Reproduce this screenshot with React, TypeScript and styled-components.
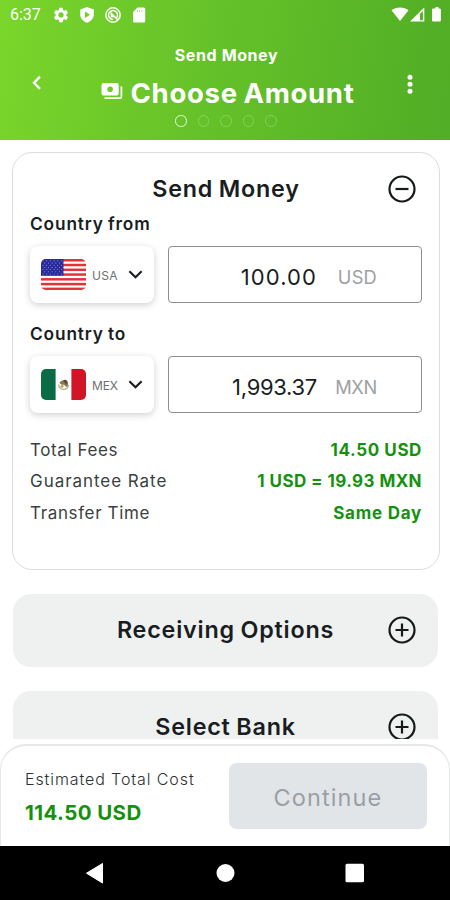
import React from 'react';
import styled, { createGlobalStyle } from 'styled-components';
import { MdSettings } from 'react-icons/md';

const GlobalStyle = createGlobalStyle`
  * { box-sizing: border-box; }
  body { margin: 0; background: #fff; font-family: Inter, "Open Sans", sans-serif; color: #191d1f; }
`;

const Screen = styled.div`
  width: 450px;
  height: 900px;
  display: flex;
  flex-direction: column;
  overflow: hidden;
  background: #fff;
`;

const Header = styled.header`
  height: 140px;
  flex: none;
  display: flex;
  flex-direction: column;
  color: #fff;
  background: linear-gradient(99deg, #7ad62a 0%, #66c229 45%, #50ad25 100%);
`;

const StatusBar = styled.div`
  height: 30px;
  padding: 0 7px 0 10px;
  display: flex;
  align-items: center;
  justify-content: space-between;
`;

const StatusGroup = styled.div<{ $gap: number }>`
  display: flex;
  align-items: center;
  gap: ${(p) => p.$gap}px;
  svg { display: block; }
`;

const Clock = styled.span`
  width: 34px;
  font: 400 16px/30px Roboto, sans-serif;
`;

const NavBar = styled.div`
  flex: 1;
  display: grid;
  grid-template-columns: 73px 1fr 81px;
`;

const IconButton = styled.button`
  border: 0;
  padding: 0;
  background: none;
  color: inherit;
  height: 106px;
  display: flex;
  align-items: center;
  justify-content: center;
`;

const Titles = styled.div`
  padding-left: 10px;
  display: flex;
  flex-direction: column;
  align-items: center;
`;

const Eyebrow = styled.div`
  margin-top: 13px;
  padding-left: 1px;
  font-size: 16px;
  font-weight: 700;
  line-height: 24px;
  letter-spacing: 0.6px;
`;

const Title = styled.h1`
  margin: 8px 0 0;
  padding-left: 3px;
  display: flex;
  align-items: center;
  gap: 8px;
  font-size: 27.5px;
  font-weight: 700;
  line-height: 36px;
  letter-spacing: 0.7px;
  word-spacing: -1.5px;
  white-space: nowrap;
  svg { margin-top: -3px; }
`;

const Steps = styled.div`
  margin-top: 4px;
  display: flex;
  gap: 11px;
`;

const Step = styled.span<{ $active?: boolean }>`
  width: 11.5px;
  height: 11.5px;
  border-radius: 50%;
  border: 1.6px solid ${(p) => (p.$active ? '#e9fbd9' : 'rgba(170, 228, 130, 0.5)')};
`;

const Content = styled.main`
  height: 599px;
  flex: none;
  padding: 12px 12px 0;
  overflow: hidden;
`;

const Card = styled.section`
  width: 428px;
  height: 418px;
  padding: 0 17px;
  border: 1.5px solid #dcdddd;
  border-radius: 20px;
  background: #fff;
`;

const PanelHeader = styled.div<{ $height: number; $top?: number }>`
  height: ${(p) => p.$height}px;
  padding-top: ${(p) => p.$top ?? 0}px;
  display: grid;
  grid-template-columns: 40px 1fr 40px;
  align-items: center;
  svg { display: block; justify-self: center; }
`;

const PanelTitle = styled.h2`
  grid-column: 2;
  margin: 0;
  text-align: center;
  font-size: 23.3px;
  font-weight: 600;
  line-height: 30px;
  letter-spacing: 0.8px;
  word-spacing: -1px;
  white-space: nowrap;
`;

const Label = styled.div`
  font-size: 17.3px;
  font-weight: 600;
  line-height: 20px;
  letter-spacing: 0.85px;
  word-spacing: -1px;
`;

const Field = styled.div<{ $gap: number }>`
  margin: 12px 0 ${(p) => p.$gap}px;
  display: flex;
  gap: 14px;
`;

const CountrySelect = styled.div`
  width: 124px;
  height: 57px;
  padding: 0 10px 0 11px;
  display: flex;
  align-items: center;
  border-radius: 8px;
  background: #fff;
  box-shadow: 0 2px 7px rgba(0, 0, 0, 0.19);
  svg { display: block; flex: none; }
`;

const CountryCode = styled.span<{ $spacing: number }>`
  width: 42px;
  padding: 1px 0 0 6px;
  font-size: 12px;
  letter-spacing: ${(p) => p.$spacing}px;
  color: #6e7070;
`;

const AmountBox = styled.div`
  width: 254px;
  height: 57px;
  padding: 4px 44px 0 0;
  display: flex;
  align-items: center;
  justify-content: flex-end;
  border: 1.5px solid #8b8d8e;
  border-radius: 4px;
`;

const Amount = styled.span<{ $spacing: number }>`
  font-size: 22px;
  font-weight: 380;
  letter-spacing: ${(p) => p.$spacing}px;
`;

const Currency = styled.span<{ $spacing: number }>`
  width: 60px;
  text-align: right;
  font-size: 18.3px;
  font-weight: 370;
  letter-spacing: ${(p) => p.$spacing}px;
  color: #9da1a2;
`;

const Detail = styled.div`
  height: 31.5px;
  display: flex;
  align-items: center;
  justify-content: space-between;
  font-size: 17px;
  white-space: nowrap;
`;

const DetailName = styled.span<{ $spacing: number }>`
  font-weight: 380;
  letter-spacing: ${(p) => p.$spacing}px;
  color: #3b3f40;
`;

const DetailValue = styled.span<{ $spacing: number }>`
  font-weight: 650;
  letter-spacing: ${(p) => p.$spacing}px;
  color: #15910f;
`;

const CollapsedPanel = styled.section`
  width: 425px;
  height: 73px;
  margin: 24px 0 0 1px;
  padding: 0 16px;
  border-radius: 18px;
  background: #eff1f1;
`;

const Footer = styled.footer`
  height: 102px;
  margin-top: 5px;
  flex: none;
  padding: 17px 22px 0 24px;
  display: flex;
  justify-content: space-between;
  border: 2px solid #e6e7e7;
  border-width: 2px 1px 0;
  border-radius: 26px 26px 0 0;
  background: #fff;
`;

const Total = styled.div`
  display: flex;
  flex-direction: column;
`;

const TotalLabel = styled.span`
  margin-top: 4px;
  font-size: 16px;
  font-weight: 330;
  line-height: 24px;
  letter-spacing: 0.9px;
  color: #2d3132;
`;

const TotalValue = styled.span`
  margin-top: 8px;
  font-size: 20.5px;
  font-weight: 680;
  line-height: 28px;
  letter-spacing: 0.4px;
  color: #15910f;
`;

const ContinueButton = styled.button`
  width: 198px;
  height: 66px;
  border: 0;
  border-radius: 8px;
  background: #e2e5e7;
  color: #999fa5;
  font-family: inherit;
  font-size: 23.5px;
  letter-spacing: 1.1px;
  padding: 2px 0 0;
`;

const SystemNav = styled.nav`
  height: 54px;
  flex: none;
  background: #000;
  svg { display: block; margin: 0 auto; }
`;

function ToggleIcon({ open }: { open?: boolean }) {
  return (
    <svg width="28" height="28" viewBox="0 0 28 28" fill="none" stroke="#15191a" strokeWidth="2.2">
      <circle cx="14" cy="14" r="12.5" />
      <path d={open ? 'M7.5 14h13' : 'M7.5 14h13M14 7.5v13'} />
    </svg>
  );
}

function Chevron() {
  return (
    <svg width="15" height="11" viewBox="0 0 15 11" fill="none" stroke="#191d1f" strokeWidth="2.1">
      <path d="M1.4 2.2 7.5 8.3l6.1-6.1" />
    </svg>
  );
}

function UsaFlag() {
  const stars = [];
  for (let r = 0; r < 7; r++) {
    for (let c = 0; c < 6; c++) {
      stars.push(<circle key={`${r}-${c}`} cx={2 + c * 3.7 + (r % 2) * 1.7} cy={1.8 + r * 2.2} r="0.5" />);
    }
  }
  return (
    <svg width="45" height="31" viewBox="0 0 45 31">
      <clipPath id="usa"><rect width="45" height="31" rx="5" /></clipPath>
      <g clipPath="url(#usa)">
        <rect width="45" height="31" fill="#fff" />
        {[0, 1, 2, 3, 4, 5, 6].map((i) => (
          <rect key={i} y={i * 4.77} width="45" height="2.5" fill="#e0343b" />
        ))}
        <rect width="22.5" height="16.6" fill="#2a2b9b" />
        <g fill="#a9a9e0">{stars}</g>
      </g>
    </svg>
  );
}

function MexicoFlag() {
  return (
    <svg width="45" height="31" viewBox="0 0 45 31">
      <clipPath id="mex"><rect width="45" height="31" rx="5" /></clipPath>
      <g clipPath="url(#mex)">
        <rect width="45" height="31" fill="#fff" />
        <rect width="14.6" height="31" fill="#0a6b45" />
        <rect x="30.4" width="14.6" height="31" fill="#d21526" />
      </g>
      <path d="M17.6 15.5c.6 3.6 3 5 5.2 4.9 2.6 0 4.2-1.7 4.6-4.6" fill="none" stroke="#a3b58b" strokeWidth="1.3" />
      <path d="M18.5 13.5c2-2.6 6.5-3.2 8-.8 1.2 2 .6 4.3-.7 5.3-1.5-.6-2-2-3.3-2.2-1.4-.2-3.2 0-4-2.3z" fill="#91754f" />
      <path d="M22 11.5c1.5-1.3 3.6-1 4.2.8.3 1.5-.4 2.6-1.2 3.2z" fill="#5c4a35" />
      <circle cx="21" cy="17.3" r="1.5" fill="#c7a257" />
    </svg>
  );
}

function PaymentsIcon() {
  return (
    <svg width="22" height="17" viewBox="0 0 22 17">
      <path fill="#fff" fillRule="evenodd" d="M2.5 0h13.2a2 2 0 0 1 2 2v8.400a2 2 0 0 1-2 2H2.500a2 2 0 0 1-2-2V2a2 2 0 0 1 2-2zM9.100 3.400a2.800 2.800 0 1 0 0 5.600 2.800 2.800 0 0 0 0-5.600z" />
      <path d="M20.4 3.5v10.200a1.400 1.400 0 0 1-1.400 1.400H3.500" fill="none" stroke="#fff" strokeWidth="1.7" />
    </svg>
  );
}

interface FieldProps {
  flag: React.ReactNode;
  code: string;
  codeSpacing: number;
  amount: string;
  amountSpacing: number;
  currency: string;
  currencySpacing: number;
  gap: number;
}

function CountryField(p: FieldProps) {
  return (
    <Field $gap={p.gap}>
      <CountrySelect>
        {p.flag}
        <CountryCode $spacing={p.codeSpacing}>{p.code}</CountryCode>
        <Chevron />
      </CountrySelect>
      <AmountBox>
        <Amount $spacing={p.amountSpacing}>{p.amount}</Amount>
        <Currency $spacing={p.currencySpacing}>{p.currency}</Currency>
      </AmountBox>
    </Field>
  );
}

const details = [
  { name: 'Total Fees', nameSpacing: 0.6, value: '14.50 USD', valueSpacing: 0.6 },
  { name: 'Guarantee Rate', nameSpacing: 0.95, value: '1 USD = 19.93 MXN', valueSpacing: 0.42 },
  { name: 'Transfer Time', nameSpacing: 0.64, value: 'Same Day', valueSpacing: 0.75 },
];

export default function App() {
  return (
    <Screen>
      <GlobalStyle />
      <Header>
        <StatusBar>
          <StatusGroup $gap={8}>
            <Clock>6:37</Clock>
            <MdSettings size={18} />
            <svg width="18" height="18" viewBox="0 0 18 18">
              <path fill="#fff" fillRule="evenodd" d="M9 1l6.8 2.600v5.200c0 3.600-2.900 6.700-6.800 8-3.900-1.300-6.800-4.400-6.800-8V3.600zM7 5.500v6.600l5-3.300z" />
            </svg>
            <svg width="18" height="18" viewBox="0 0 18 18" fill="none" stroke="#fff" strokeWidth="1.5">
              <circle cx="9" cy="9" r="7.2" />
              <path d="M12.300 12.100A4.500 4.500 0 1 0 9 13.500M6.500 6.500l7.500 7.700M7.500 8v2.500h2.500" />
            </svg>
            <svg width="18" height="18" viewBox="0 0 18 18">
              <path fill="#fff" fillRule="evenodd" d="M7.500 1.500h6.200A1.500 1.500 0 0 1 15.200 3v12a1.500 1.500 0 0 1-1.500 1.500H4.500A1.500 1.500 0 0 1 3 15V6zM7 4.200v1.800h.6V4.200zm2.300 0v1.800h.6V4.200zm2.300 0v1.800h.6V4.200z" />
            </svg>
          </StatusGroup>
          <svg width="52" height="18" viewBox="0 0 52 18">
            <path fill="#fff" d="M.5 4.300C5.500.5 12.500.5 17.500 4.300L9 15z" />
            <path fill="#fff" fillRule="evenodd" d="M33.300 1.500v14H19zM31.900 5v9.200h-3V8z" />
            <path fill="#fff" d="M44.500 1h3v1.500h1.200a1.200 1.200 0 0 1 1.200 1.200v10.600a1.200 1.200 0 0 1-1.200 1.200h-6.500a1.200 1.200 0 0 1-1.200-1.200V3.700a1.200 1.200 0 0 1 1.200-1.200h2.300z" />
          </svg>
        </StatusBar>
        <NavBar>
          <IconButton aria-label="Back">
            <svg width="12" height="16" viewBox="0 0 12 16" fill="none" stroke="#fff" strokeWidth="2.4">
              <path d="M9 1.700 3 7.800l6 6.100" />
            </svg>
          </IconButton>
          <Titles>
            <Eyebrow>Send Money</Eyebrow>
            <Title><PaymentsIcon />Choose Amount</Title>
            <Steps>
              <Step $active />
              <Step />
              <Step />
              <Step />
              <Step />
            </Steps>
          </Titles>
          <IconButton aria-label="More">
            <svg width="8" height="22" viewBox="0 0 8 22" fill="#fff">
              <circle cx="4" cy="5.3" r="2.5" />
              <circle cx="4" cy="12.3" r="2.5" />
              <circle cx="4" cy="19.2" r="2.5" />
            </svg>
          </IconButton>
        </NavBar>
      </Header>
      <Content>
        <Card>
          <PanelHeader $height={61} $top={10}>
            <PanelTitle>Send Money</PanelTitle>
            <ToggleIcon open />
          </PanelHeader>
          <Label>Country from</Label>
          <CountryField flag={<UsaFlag />} code="USA" codeSpacing={0.3} amount="100.00" amountSpacing={1.1} currency="USD" currencySpacing={0.2} gap={21} />
          <Label>Country to</Label>
          <CountryField flag={<MexicoFlag />} code="MEX" codeSpacing={-0.1} amount="1,993.37" amountSpacing={-0.3} currency="MXN" currencySpacing={-0.3} gap={21} />
          {details.map((d) => (
            <Detail key={d.name}>
              <DetailName $spacing={d.nameSpacing}>{d.name}</DetailName>
              <DetailValue $spacing={d.valueSpacing}>{d.value}</DetailValue>
            </Detail>
          ))}
        </Card>
        <CollapsedPanel>
          <PanelHeader $height={71}>
            <PanelTitle>Receiving Options</PanelTitle>
            <ToggleIcon />
          </PanelHeader>
        </CollapsedPanel>
        <CollapsedPanel>
          <PanelHeader $height={72}>
            <PanelTitle>Select Bank</PanelTitle>
            <ToggleIcon />
          </PanelHeader>
        </CollapsedPanel>
      </Content>
      <Footer>
        <Total>
          <TotalLabel>Estimated Total Cost</TotalLabel>
          <TotalValue>114.50 USD</TotalValue>
        </Total>
        <ContinueButton>Continue</ContinueButton>
      </Footer>
      <SystemNav>
        <svg width="450" height="54" viewBox="0 0 450 54" fill="#fff">
          <path d="M102.500 17.500v19.500L86.500 27.200z" stroke="#fff" strokeLinejoin="round" />
          <circle cx="225.5" cy="27" r="9" />
          <rect x="345.5" y="17.7" width="18.5" height="18.5" rx="1.5" />
        </svg>
      </SystemNav>
    </Screen>
  );
}
